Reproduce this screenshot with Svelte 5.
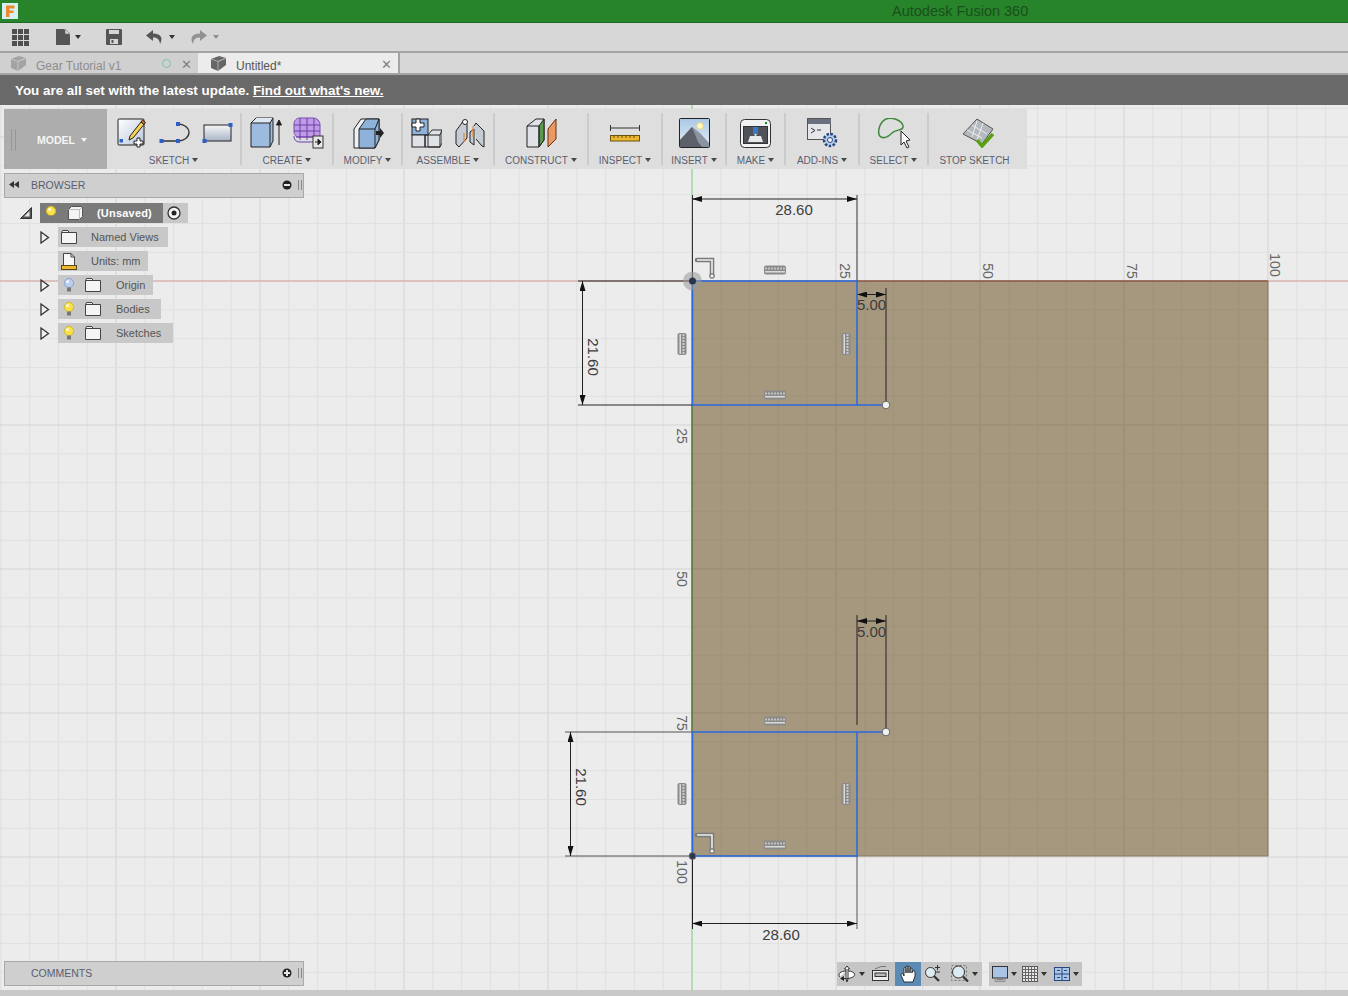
<script>
  const originX = 692;
  const originY = 281;
  const step = 28.8;

  const gridX = [];
  for (let i = -24; i <= 23; i++) gridX.push({ pos: originX + i * step, major: i % 5 === 0 });
  const gridY = [];
  for (let i = -6; i <= 25; i++) gridY.push({ pos: originY + i * step, major: i % 5 === 0 });

  const treeRows = [
    { name: "Named Views", icon: "folder", arrow: true, bulb: null, cls: "r-views" },
    { name: "Units: mm", icon: "units", arrow: false, bulb: null, cls: "r-units" },
    { name: "Origin", icon: "folder", arrow: true, bulb: "blue", cls: "r-origin" },
    { name: "Bodies", icon: "folder", arrow: true, bulb: "yellow", cls: "r-bodies" },
    { name: "Sketches", icon: "folder", arrow: true, bulb: "yellow", cls: "r-sketches" },
  ];

  const topTicks = [
    { x: 845, y: 271, t: "25" },
    { x: 988, y: 271, t: "50" },
    { x: 1132, y: 271, t: "75" },
    { x: 1275, y: 265, t: "100" },
  ];
  const sideTicks = [
    { y: 436, t: "25" },
    { y: 579, t: "50" },
    { y: 723, t: "75" },
    { y: 872, t: "100" },
  ];
  const hMarks = [[775, 270], [775, 395], [775, 721], [775, 845]];
  const vMarks = [[682, 344], [846, 344], [682, 794], [846, 794]];
</script>

{#snippet bulb(kind)}
  <svg class="bulb" width="14" height="16" viewBox="0 0 14 16">
    <circle cx="7" cy="6" r="4.6" fill={kind === "blue" ? "#b9cdf0" : "#f7e04a"} stroke={kind === "blue" ? "#8fa6cc" : "#d8b92a"} />
    <circle cx="5.6" cy="4.6" r="1.6" fill="#fff" opacity="0.8" />
    <rect x="5" y="10.5" width="4" height="4" fill="#777" />
  </svg>
{/snippet}

{#snippet folder()}
  <svg width="16" height="14" viewBox="0 0 16 14">
    <path d="M.5 2.5V13.5H15.5V2.5H8L7 .5H1.5L.5 2.5ZM.5 2.5H8" fill="#f4f4f4" stroke="#444" />
  </svg>
{/snippet}

{#snippet units()}
  <svg width="16" height="17" viewBox="0 0 16 17">
    <path d="M2.5 .5H10L13.5 4V12.5H2.5Z" fill="#f6f6f6" stroke="#444" />
    <path d="M10 .5V4H13.5" fill="none" stroke="#444" />
    <rect x=".5" y="12.5" width="15" height="4" fill="#eeb62e" stroke="#5a4a18" />
  </svg>
{/snippet}

{#snippet arrow()}
  <svg width="10" height="13" viewBox="0 0 10 13">
    <path d="M1 1L8.5 6.5L1 12Z" fill="#f2f2f2" stroke="#333" stroke-width="1.3" />
  </svg>
{/snippet}

{#snippet hMark(x, y, rot)}
  <g transform="translate({x} {y}) rotate({rot})">
    <rect x="-11" y="-4.500" width="22" height="9" rx="2" fill="#8a8a8a" />
    <path d="M-10 1.800H10" stroke="#e8e8e8" stroke-width="1.300" />
    <path d="M-9-.5V-2.500M-6-.5V-2.500M-3-.5V-2.500M0-.5V-2.500M3-.5V-2.500M6-.5V-2.500M9-.5V-2.500" stroke="#e0e0e0" stroke-width="1.300" />
  </g>
{/snippet}

{#snippet perp(y)}
  <g fill="none">
    <path d="M697 {y}H712V{y + 16}" stroke="#7a7a7a" stroke-width="4.500" stroke-linecap="round" />
    <path d="M697 {y}H712V{y + 16}" stroke="#eee" stroke-width="1.600" />
    <circle cx="712" cy={y + 16} r="2.200" fill="#eee" stroke="#7a7a7a" stroke-width="1.200" />
  </g>
{/snippet}

<div class="app">
  <header class="titlebar">
    <svg class="logo" width="16" height="16" viewBox="0 0 16 16">
      <rect width="16" height="16" fill="#d9eef0" />
      <path d="M4 2.5H12.5V5.5H7.5V7.5H11.5V10H7.5V14H4Z" fill="#e98a2c" />
    </svg>
    <span class="app-title">Autodesk Fusion 360</span>
  </header>

  <div class="quickbar">
    <svg class="q-grid" width="17" height="17" viewBox="0 0 17 17" fill="#4f4f4f">
      <rect width="5" height="5" /><rect x="6" width="5" height="5" /><rect x="12" width="5" height="5" />
      <rect y="6" width="5" height="5" /><rect x="6" y="6" width="5" height="5" /><rect x="12" y="6" width="5" height="5" />
      <rect y="12" width="5" height="5" /><rect x="6" y="12" width="5" height="5" /><rect x="12" y="12" width="5" height="5" />
    </svg>
    <svg class="q-doc" width="14" height="16" viewBox="0 0 14 16"><path d="M0 0H8L14 6V16H0Z" fill="#555" /><path d="M9 0L14 5H9Z" fill="#d7d7d7" stroke="#555" stroke-width=".5" /></svg>
    <i class="caret dark q-c1"></i>
    <svg class="q-save" width="16" height="16" viewBox="0 0 16 16"><path d="M1 0H15A1 1 0 0 1 16 1V15A1 1 0 0 1 15 16H1A1 1 0 0 1 0 15V1A1 1 0 0 1 1 0Z" fill="#555" /><rect x="3" y="1" width="10" height="4" fill="#d7d7d7" /><rect x="4" y="10" width="8" height="5" fill="#d7d7d7" /><rect x="5.500" y="11" width="2" height="3" fill="#555" /></svg>
    <svg class="q-undo" width="17" height="14" viewBox="0 0 17 14"><path d="M7 0L0 5.5L7 11V7.5C11 7.500 13.500 9 14 14C17 9 16 3.500 7 3.500Z" fill="#555" /></svg>
    <i class="caret dark q-c2"></i>
    <svg class="q-redo" width="17" height="14" viewBox="0 0 17 14"><path d="M10 0L17 5.500L10 11V7.500C6 7.500 3.500 9 3 14C0 9 1 3.500 10 3.500Z" fill="#929292" /></svg>
    <i class="caret light q-c3"></i>
  </div>

  <nav class="tabs">
    <div class="tab inactive">
      <svg width="16" height="15" viewBox="0 0 16 15"><path d="M1 3L9 0L16 2V9L8 15L1 12Z" fill="#a3a3a3" /><path d="M1 3L8 5.500L16 2L8 5.500V15" fill="none" stroke="#c4c4c4" /></svg>
      <span class="tab-name">Gear Tutorial v1</span>
      <i class="ring"></i>
      <span class="close">✕</span>
    </div>
    <div class="tab active">
      <svg width="16" height="15" viewBox="0 0 16 15"><path d="M1 3L9 0L16 2V9L8 15L1 12Z" fill="#666" /><path d="M1 3L8 5.500L16 2L8 5.500V15" fill="none" stroke="#aaa" /></svg>
      <span class="tab-name">Untitled*</span>
      <span class="close">✕</span>
    </div>
  </nav>

  <div class="banner">You are all set with the latest update. <a href="#new" class="banner-link">Find out what's new.</a></div>

  <main class="viewport">
    <svg class="canvas" viewBox="0 105 1348 891" width="1348" height="891">
      <defs>
        <marker id="arr" markerWidth="10" markerHeight="6" refX="10" refY="3" orient="auto-start-reverse" markerUnits="userSpaceOnUse">
          <path d="M0 0L10 3L0 6Z" fill="#111" />
        </marker>
        <clipPath id="plane"><rect x="692" y="281" width="576" height="575" /></clipPath>
      </defs>

      {#each gridX as g}
        <line x1={g.pos} x2={g.pos} y1="105" y2="996" stroke={g.major ? "#d4d4d4" : "#e0e0e0"} />
      {/each}
      {#each gridY as g}
        <line x1="0" x2="1348" y1={g.pos} y2={g.pos} stroke={g.major ? "#d4d4d4" : "#e0e0e0"} />
      {/each}

      <line x1="0" x2="1348" y1="281" y2="281" stroke="#d9a29c" />
      <line x1="692" x2="692" y1="105" y2="990" stroke="#84d884" />

      <rect x="692" y="281" width="576" height="575" fill="#a5987e" />
      <g clip-path="url(#plane)" stroke-width="1.500">
        {#each gridX as g}
          <line x1={g.pos} x2={g.pos} y1="281" y2="856" stroke={g.major ? "#9c8f76" : "#a1947a"} />
        {/each}
        {#each gridY as g}
          <line x1="692" x2="1268" y1={g.pos} y2={g.pos} stroke={g.major ? "#9c8f76" : "#a1947a"} />
        {/each}
      </g>
      <rect x="692" y="281" width="576" height="575" fill="none" stroke="#85795f" />
      <line x1="692" x2="692" y1="405" y2="732" stroke="#3f7c32" />
      <line x1="857" x2="1268" y1="281" y2="281" stroke="#8a4a3c" />

      {#each topTicks as t}
        <text class="tick" text-anchor="middle" transform="translate({t.x} {t.y}) rotate(90)" dy="5">{t.t}</text>
      {/each}
      {#each sideTicks as t}
        <text class="tick" text-anchor="middle" transform="translate(682 {t.y}) rotate(90)" dy="5">{t.t}</text>
      {/each}

      {#each hMarks as m}
        {@render hMark(m[0], m[1], 0)}
      {/each}
      {#each vMarks as m}
        {@render hMark(m[0], m[1], 90)}
      {/each}
      {@render perp(260)}
      {@render perp(835)}

      <!-- dimensions -->
      <g stroke="#222" fill="none">
        <path d="M692.500 195V281M857 195V281" stroke="#333" />
        <line x1="692" x2="857" y1="199" y2="199" marker-start="url(#arr)" marker-end="url(#arr)" />

        <path d="M578 281H692M578 405H692" />
        <line x1="582.500" x2="582.500" y1="281" y2="405" marker-start="url(#arr)" marker-end="url(#arr)" />

        <path d="M886 288V405" />
        <line x1="857" x2="886" y1="294.500" y2="294.500" marker-start="url(#arr)" marker-end="url(#arr)" />

        <path d="M857 615V725M886 615V732" />
        <line x1="857" x2="886" y1="621" y2="621" marker-start="url(#arr)" marker-end="url(#arr)" />

        <path d="M565 732H692M565 856H692" stroke="#555" />
        <line x1="570.500" x2="570.500" y1="732" y2="856" marker-start="url(#arr)" marker-end="url(#arr)" />

        <path d="M692.500 856V929" />
        <path d="M857 856V929" stroke="#555" />
        <line x1="692" x2="857" y1="923.500" y2="923.500" marker-start="url(#arr)" marker-end="url(#arr)" />
      </g>

      <text class="dim" x="794" y="215" text-anchor="middle">28.60</text>
      <text class="dim" x="781" y="940" text-anchor="middle">28.60</text>
      <text class="dim" x="871.500" y="310" text-anchor="middle">5.00</text>
      <text class="dim" x="871.500" y="637" text-anchor="middle">5.00</text>
      <text class="dim" text-anchor="middle" transform="translate(587.500 357) rotate(90)">21.60</text>
      <text class="dim" text-anchor="middle" transform="translate(575.500 787) rotate(90)">21.60</text>

      <!-- sketch lines -->
      <g stroke="#2a68e0" stroke-width="1.500" fill="none">
        <path d="M692.500 281H857V405H692.500Z" />
        <path d="M857 405H886" />
        <path d="M692.500 732H886M857 732V856H692.500V732" />
      </g>
      <circle cx="886" cy="405" r="3.800" fill="#f2f2f2" stroke="#666" />
      <circle cx="886" cy="732" r="3.800" fill="#f2f2f2" stroke="#666" />
      <circle cx="692.500" cy="281" r="9.500" fill="#999" fill-opacity="0.55" />
      <circle cx="692.500" cy="281" r="3.500" fill="#2a3550" />
      <circle cx="692.500" cy="856" r="3.500" fill="#2a3550" stroke="#777" />
    </svg>

    <div class="overlay">
      <div class="toolbar">
        <div class="model">
          <i class="grip"></i>
          <span class="model-label">MODEL</span>
          <i class="caret white"></i>
        </div>

        <div class="tool t-sketch">
          <div class="icons">
            <svg width="30" height="30" viewBox="0 0 30 30">
              <defs><linearGradient id="paper" x1="0" y1="0" x2="1" y2="1"><stop offset="0" stop-color="#fff" /><stop offset="1" stop-color="#b8c6dc" /></linearGradient></defs>
              <rect x="1" y="1" width="26" height="26" rx="1" fill="url(#paper)" stroke="#222" />
              <rect x="2.500" y="21" width="3.500" height="3.500" fill="#2d66c8" />
              <path d="M13 18L24 4L27 6.500L16 20L12 22Z" fill="#f6d34e" stroke="#222" />
              <path d="M24 4L25.500 2L28.500 4.500L27 6.500Z" fill="#d9702a" stroke="#222" />
              <path d="M20 20H23V23H26V26H23V29H20V26H17V23H20Z" fill="#fff" stroke="#222" />
            </svg>
            <svg class="sk-curve" width="33" height="25" viewBox="0 0 33 25">
              <path d="M3 20H19A11 8.500 0 0 0 19 3" fill="none" stroke="#333" stroke-width="1.300" />
              <rect x=".500" y="18" width="4" height="4" fill="#2d5fc4" />
              <rect x="17" y="18" width="4" height="4" fill="#2d5fc4" />
              <rect x="17" y="1" width="4" height="4" fill="#2d5fc4" />
            </svg>
            <svg width="31" height="22" viewBox="0 0 31 22">
              <defs><linearGradient id="plate" x1="0" y1="0" x2="0" y2="1"><stop offset="0" stop-color="#f6f6f6" /><stop offset="1" stop-color="#a9b4c8" /></linearGradient></defs>
              <rect x="2" y="3" width="27" height="16" fill="url(#plate)" stroke="#222" />
              <rect x="26.500" y="1" width="4" height="4" fill="#2d5fc4" />
              <rect x=".500" y="17" width="4" height="4" fill="#2d5fc4" />
            </svg>
          </div>
          <span class="label">SKETCH<i class="caret"></i></span>
        </div>
        <i class="sep"></i>

        <div class="tool t-create">
          <div class="icons">
            <svg width="32" height="32" viewBox="0 0 32 32">
              <path d="M1 6L6 1H23V24L20 30H1Z" fill="#9cbbde" stroke="#222" />
              <path d="M6 1V1L1 6H20L23 1" fill="#dfe8f2" stroke="#222" />
              <path d="M20 6V30" stroke="#222" />
              <path d="M29 28V5M26.500 8L29 3L31.500 8Z" stroke="#222" fill="#222" />
            </svg>
            <svg width="31" height="32" viewBox="0 0 31 32">
              <path d="M7 1H20C24 1 27 4 27 8V20H6C3 20 1 18 1 14V7C1 4 3 1 7 1Z" fill="#bf9ae6" stroke="#7a4fb0" />
              <path d="M1 8H27M1 14H27M7 1V23M14 1V23M21 1V23M3 20H27V25H7Q1 25 1 19" fill="none" stroke="#6a3fa5" />
              <rect x="20" y="19" width="10" height="12" fill="#e6e6e6" stroke="#333" />
              <path d="M22 25H25M25 22L28 25L25 28Z" fill="#222" stroke="#222" />
            </svg>
          </div>
          <span class="label">CREATE<i class="caret"></i></span>
        </div>
        <i class="sep"></i>

        <div class="tool t-modify">
          <div class="icons">
            <svg width="31" height="31" viewBox="0 0 31 31">
              <path d="M1 11L8 1H26V22L22 30H1Z" fill="#eef1f5" stroke="#222" />
              <path d="M6 11L13 1H26V22L22 30H6Z" fill="#8fb2db" stroke="#222" />
              <path d="M6 11H22V30M22 11L26 1" fill="none" stroke="#222" />
              <path d="M23 13H27V10L31 15L27 20V17H23Z" fill="#222" />
            </svg>
          </div>
          <span class="label">MODIFY<i class="caret"></i></span>
        </div>
        <i class="sep"></i>

        <div class="tool t-assemble">
          <div class="icons">
            <svg width="31" height="30" viewBox="0 0 31 30">
              <rect x="1" y="1" width="16" height="16" fill="#8fb2db" stroke="#222" />
              <path d="M5 1H9V5H13V9H9V13H5V9H1V5H5Z" fill="#fff" stroke="#222" />
              <path d="M17 17L21 12H31V25L29 29H17Z" fill="#dfe3e8" stroke="#333" />
              <rect x="1" y="17" width="13" height="12" fill="#dfe3e8" stroke="#222" />
              <path d="M14 17H29V29H14ZM29 17L31 12" fill="none" stroke="#222" />
            </svg>
            <svg width="30" height="30" viewBox="0 0 30 30">
              <path d="M1 13L9 2L12 6V20L4 29L1 26Z" fill="#c6ccd4" stroke="#222" />
              <circle cx="10" cy="4" r="2.500" fill="#fff" stroke="#222" />
              <path d="M15 14L19 11V27L15 24ZM19 8L21 5L29 13V29L27 28L21 21" fill="#c6ccd4" stroke="#222" />
              <path d="M18 8V19M9 15V24" stroke="#e98a2c" stroke-width="1.200" />
            </svg>
          </div>
          <span class="label">ASSEMBLE<i class="caret"></i></span>
        </div>
        <i class="sep"></i>

        <div class="tool t-construct">
          <div class="icons">
            <svg width="31" height="30" viewBox="0 0 31 30">
              <path d="M1 8L10 1H18V22L13 29H1Z" fill="#dfe3e8" stroke="#222" />
              <path d="M13 8L18 1V22L13 29Z" fill="#5a9a4a" stroke="#222" />
              <path d="M1 8H13V29" fill="none" stroke="#222" />
              <path d="M22 11L30 1V21L22 29Z" fill="#e89a62" stroke="#6a2f14" />
            </svg>
          </div>
          <span class="label">CONSTRUCT<i class="caret"></i></span>
        </div>
        <i class="sep"></i>

        <div class="tool t-inspect">
          <div class="icons">
            <svg width="30" height="18" viewBox="0 0 30 18">
              <path d="M1 4H29M.500 1V7M29.500 1V7" stroke="#333" fill="none" />
              <rect x=".500" y="11.500" width="29" height="5.500" fill="#eab72f" stroke="#6a5212" />
              <path d="M4 12V14M8 12V14M12 12V14M16 12V14M20 12V14M24 12V14" stroke="#6a5212" />
            </svg>
          </div>
          <span class="label">INSPECT<i class="caret"></i></span>
        </div>
        <i class="sep"></i>

        <div class="tool t-insert">
          <div class="icons">
            <svg width="31" height="31" viewBox="0 0 31 31">
              <defs><linearGradient id="sky" x1="0" y1="0" x2="0" y2="1"><stop offset="0" stop-color="#a9c8e6" /><stop offset="1" stop-color="#e8eef4" /></linearGradient></defs>
              <rect x=".500" y=".500" width="30" height="29" rx="1" fill="url(#sky)" stroke="#222" />
              <circle cx="21" cy="8" r="3.200" fill="#fff6c4" stroke="#f0d878" />
              <path d="M1 22L13 9L21 15L30 25V29H1Z" fill="#8a94a2" />
              <path d="M1 22L13 9L19 24L23 29H1Z" fill="#5c6068" />
            </svg>
          </div>
          <span class="label">INSERT<i class="caret"></i></span>
        </div>
        <i class="sep"></i>

        <div class="tool t-make">
          <div class="icons">
            <svg width="31" height="29" viewBox="0 0 31 29">
              <rect x=".500" y=".500" width="30" height="28" rx="4" fill="#f2f2f2" stroke="#333" />
              <rect x="3.500" y="7.500" width="24" height="17" fill="#50525a" stroke="#333" />
              <rect x="13" y="8" width="5" height="7" fill="#3a78c8" />
              <path d="M14 15H17L15.500 18Z" fill="#ddd" />
              <path d="M8 23L10 17H21L23 23Z" fill="#e8e8e8" />
              <rect x="25" y="3" width="2" height="2" fill="#0a8a2a" />
            </svg>
          </div>
          <span class="label">MAKE<i class="caret"></i></span>
        </div>
        <i class="sep"></i>

        <div class="tool t-addins">
          <div class="icons">
            <svg width="31" height="30" viewBox="0 0 31 30">
              <rect x=".500" y=".500" width="23" height="21" fill="#e4e6ea" stroke="#555" />
              <rect x="1" y="1" width="23" height="5" fill="#6a7080" />
              <path d="M4 10L8 12.500L4 15M10 12H14" fill="none" stroke="#333" />
              <circle cx="23" cy="22" r="6" fill="#b8cdea" stroke="#27477e" stroke-width="2.500" stroke-dasharray="2.500 1.500" />
              <circle cx="23" cy="22" r="2.500" fill="#f2f2f2" stroke="#27477e" />
            </svg>
          </div>
          <span class="label">ADD-INS<i class="caret"></i></span>
        </div>
        <i class="sep"></i>

        <div class="tool t-select">
          <div class="icons">
            <svg width="34" height="31" viewBox="0 0 34 31">
              <path d="M9 1C15 -1 25 2 26 8C27 13 19 11 15 15C12 18 8 21 4 19C0 17 1 5 9 1Z" fill="none" stroke="#3f8a3a" stroke-width="1.500" />
              <path d="M24 13V27L27 24L30 30L32 29L29 23L33 22Z" fill="#fff" stroke="#222" />
            </svg>
          </div>
          <span class="label">SELECT<i class="caret"></i></span>
        </div>
        <i class="sep"></i>

        <div class="tool t-stop">
          <div class="icons">
            <svg width="32" height="30" viewBox="0 0 32 30">
              <path d="M1 16L15 1L31 11L20 26Z" fill="#b4b8bf" stroke="#555" />
              <path d="M5 12L20 20M10 7L25 16M15 3L10 19M21 5L15 22" stroke="#eee" fill="none" />
              <path d="M15 22L20 28L31 16" fill="none" stroke="#5aa012" stroke-width="3.500" />
            </svg>
          </div>
          <span class="label">STOP SKETCH</span>
        </div>
      </div>

      <div class="panel browser">
        <svg class="rewind" width="10" height="7" viewBox="0 0 10 7" fill="#333"><path d="M5 0V7L0 3.500ZM10 0V7L5 3.500Z" /></svg>
        <span class="panel-title">BROWSER</span>
        <svg class="pin" width="10" height="10" viewBox="0 0 10 10"><circle cx="5" cy="5" r="4.500" fill="#222" /><rect x="2" y="4" width="6" height="2" fill="#e6e6e6" /></svg>
        <i class="panel-grip"></i>
      </div>

      <div class="tree">
        <div class="row root-row">
          <svg class="collapse" width="12" height="12" viewBox="0 0 12 12"><path d="M11.500 .5V11.500H.5Z" fill="#555" stroke="#333" /><path d="M9.500 4V9.500H4Z" fill="#e8e8e8" /></svg>
          <div class="root-main">
            {@render bulb("yellow")}
            <svg class="root-cube" width="15" height="14" viewBox="0 0 15 14"><path d="M.5 3.500L3.500 .5H14.500V10.500L11.500 13.500H.5Z" fill="#f4f4f4" stroke="#555" /><path d="M.5 3.500H11.500V13.500M11.500 3.500L14.500 .5" fill="none" stroke="#bbb" /></svg>
            <span class="root-name">(Unsaved)</span>
          </div>
          <div class="root-end"><svg width="14" height="14" viewBox="0 0 14 14"><circle cx="7" cy="7" r="6" fill="#f4f4f4" stroke="#333" stroke-width="1.300" /><circle cx="7" cy="7" r="2.500" fill="#222" /></svg></div>
        </div>
        {#each treeRows as r}
          <div class="row">
            <span class="expander">{#if r.arrow}{@render arrow()}{/if}</span>
            <div class="node {r.cls}" class:has-bulb={r.bulb}>
              {#if r.bulb}{@render bulb(r.bulb)}{/if}
              <span class="node-icon">{#if r.icon === "folder"}{@render folder()}{:else}{@render units()}{/if}</span>
              <span class="node-name">{r.name}</span>
            </div>
          </div>
        {/each}
      </div>

      <div class="footer">
        <div class="panel comments">
          <span class="panel-title">COMMENTS</span>
          <svg class="pin" width="10" height="10" viewBox="0 0 10 10"><circle cx="5" cy="5" r="4.500" fill="#222" /><path d="M2 4H4V2H6V4H8V6H6V8H4V6H2Z" fill="#e6e6e6" /></svg>
          <i class="panel-grip"></i>
        </div>

        <div class="nav-group first">
          <div class="nav-btn w32 nudge">
            <svg width="18" height="18" viewBox="0 0 18 18"><path d="M9 1L11.500 4H10V14L9 17L8 14V4H6.500ZM2 12C-1 9 3 6 8 6M10 6C15 6 19 9 15 12C13 13 10 14 6 13.500" fill="#fff" stroke="#333" /><path d="M6 11V16L2 13.500Z" fill="#222" /></svg>
            <i class="caret dark"></i>
          </div>
          <div class="nav-btn w26 nudge">
            <svg width="17" height="15" viewBox="0 0 17 15"><rect x=".5" y="4.500" width="16" height="10" fill="#eee" stroke="#333" /><rect x="3" y="7" width="11" height="3.500" fill="#bbb" stroke="#333" /><path d="M3 3L9 .5H14" fill="none" stroke="#777" /></svg>
          </div>
          <div class="nav-btn w26 on">
            <svg width="17" height="18" viewBox="0 0 17 18"><path d="M4 17L1 10C.5 8.500 2 8 3 9L4 11V3.500C4 2 6 2 6 3.500V8V2C6 .5 8 .5 8 2V8V2.500C8 1 10 1 10 2.500V8V4C10 2.500 12 2.500 12 4V8V7C12 5.500 15 5.500 15 7V11L13 17Z" fill="#fff" stroke="#222" stroke-width=".9" /></svg>
          </div>
          <div class="nav-btn w26 nudge">
            <svg width="17" height="17" viewBox="0 0 17 17"><circle cx="6.500" cy="7.500" r="5" fill="#dcecf4" stroke="#333" /><path d="M10 11L15 16" stroke="#333" stroke-width="2.200" /><path d="M11 2.500H16M13.500 0V5M11 7H16" stroke="#333" fill="none" /></svg>
          </div>
          <div class="nav-btn w35">
            <svg width="18" height="18" viewBox="0 0 18 18"><rect x=".5" y=".5" width="15" height="15" fill="none" stroke="#777" stroke-dasharray="2 2" /><circle cx="7.500" cy="7" r="6" fill="#dcecf4" stroke="#333" /><path d="M12 11.500L17 16.500" stroke="#333" stroke-width="2.200" /></svg>
            <i class="caret dark"></i>
          </div>
        </div>

        <div class="nav-group second">
          <div class="nav-btn w30">
            <svg width="16" height="16" viewBox="0 0 16 16"><rect x=".5" y=".5" width="15" height="11.500" fill="#a9c4e6" stroke="#333" /><rect x="5" y="12" width="6" height="2" fill="#888" /><rect x="3" y="14" width="10" height="1.500" fill="#ddd" stroke="#555" stroke-width=".5" /></svg>
            <i class="caret dark"></i>
          </div>
          <div class="nav-btn w31">
            <svg width="16" height="16" viewBox="0 0 16 16"><rect x=".5" y=".5" width="15" height="15" fill="#e8e8e8" stroke="#555" /><path d="M3.500 0V16M6.500 0V16M9.500 0V16M12.500 0V16M0 3.500H16M0 6.500H16M0 9.500H16M0 12.500H16" stroke="#666" /></svg>
            <i class="caret dark"></i>
          </div>
          <div class="nav-btn w32">
            <svg width="16" height="14" viewBox="0 0 16 14"><rect x=".5" y=".5" width="15" height="13" fill="#a9c4e6" stroke="#27477e" /><path d="M8 0V14M0 7H16M3 3.500H6M10 3.500H13M3 10.500H6M10 10.500H13" stroke="#27477e" /></svg>
            <i class="caret dark"></i>
          </div>
        </div>
      </div>
    </div>

    <div class="bottom-strip"></div>
  </main>
</div>

<style>
  :global(body) {
    margin: 0;
    background: #ececec;
    font-family: "Liberation Sans", Arial, sans-serif;
  }
  .app {
    width: 1348px;
    height: 996px;
    display: flex;
    flex-direction: column;
    overflow: hidden;
  }
  svg {
    display: block;
    flex: none;
  }
  .titlebar {
    height: 23px;
    box-sizing: border-box;
    background: #27842a;
    border-bottom: 1px solid #1f6a22;
    display: flex;
    align-items: center;
    padding-left: 2px;
  }
  .app-title {
    margin-left: 874px;
    font-size: 14.5px;
    color: #1a4f1d;
  }
  .quickbar {
    height: 30px;
    box-sizing: border-box;
    background: #d7d7d7;
    border-bottom: 2px solid #a3a3a3;
    display: flex;
    align-items: center;
    padding-left: 12px;
  }

  .caret {
    display: inline-block;
    width: 0;
    height: 0;
    border-left: 3px solid transparent;
    border-right: 3px solid transparent;
    border-top: 4px solid #4a4a4a;
    margin-left: 3px;
    vertical-align: 2px;
    flex: none;
  }
  .caret.dark { border-left-width: 3.5px; border-right-width: 3.5px; border-top-color: #333; }
  .caret.light { border-left-width: 3.5px; border-right-width: 3.5px; border-top-color: #8e8e8e; }
  .caret.white { border-top-color: #f4f4f4; margin-left: 6px; }

  .q-doc { margin-left: 27px; }
  .caret.q-c1 { margin-left: 5px; }
  .q-save { margin-left: 25px; }
  .q-undo { margin-left: 24px; }
  .caret.q-c2 { margin-left: 6px; }
  .q-redo { margin-left: 15px; }
  .caret.q-c3 { margin-left: 6px; }

  .tabs {
    height: 22px;
    box-sizing: border-box;
    background: #d7d7d7;
    border-bottom: 2px solid #a3a3a3;
    display: flex;
  }
  .tab {
    height: 20px;
    box-sizing: border-box;
    display: flex;
    align-items: center;
    padding-left: 10px;
    font-size: 12px;
  }
  .tab.inactive {
    background: #d0d0d0;
    color: #8d8d8d;
    border-right: 2px solid #ececec;
    width: 200px;
  }
  .tab.active {
    background: #ececec;
    color: #555;
    border-right: 2px solid #a3a3a3;
    width: 200px;
  }
  .tab-name {
    margin-left: 10px;
    padding-top: 5px;
    flex: 1;
  }
  .ring {
    width: 7px;
    height: 7px;
    border: 1.5px solid #73c6b0;
    border-radius: 50%;
    margin-right: 10px;
  }
  .close {
    font-size: 13px;
    font-weight: bold;
    font-family: "DejaVu Sans", sans-serif;
    color: #808080;
    margin-right: 6px;
    padding-top: 2px;
  }
  .banner {
    height: 30px;
    background: #696969;
    color: #fff;
    font-size: 13.4px;
    font-weight: bold;
    line-height: 31px;
    padding-left: 15px;
    flex: none;
  }
  .banner-link {
    color: #fff;
    text-decoration: underline;
  }

  .viewport {
    position: relative;
    flex: 1;
    background: #ececec;
  }
  .canvas {
    position: absolute;
    inset: 0;
  }
  .tick {
    font-size: 14px;
    fill: #666;
  }
  .dim {
    font-size: 15px;
    fill: #3c3c3c;
  }
  .bottom-strip {
    position: absolute;
    left: 0;
    right: 0;
    bottom: 0;
    height: 6px;
    background: #c9c9c9;
  }
  .overlay {
    position: absolute;
    inset: 0;
    display: flex;
    flex-direction: column;
    padding: 4px 0 10px 4px;
    box-sizing: border-box;
  }

  .toolbar {
    width: 1023px;
    height: 60px;
    background: #dedede;
    display: flex;
    align-items: stretch;
    flex: none;
  }
  .model {
    width: 103px;
    background: #adadad;
    display: flex;
    align-items: center;
    padding: 2px 0 0 7px;
    box-sizing: border-box;
  }
  .grip {
    width: 3px;
    height: 22px;
    border-left: 1px solid #969696;
    border-right: 1px solid #969696;
  }
  .model-label {
    margin-left: 21px;
    color: #f6f6f6;
    font-size: 10.5px;
    font-weight: bold;
  }
  .tool {
    display: flex;
    flex-direction: column;
    align-items: center;
    justify-content: flex-end;
    box-sizing: border-box;
    padding-bottom: 2px;
  }
  .icons {
    flex: 1;
    display: flex;
    align-items: center;
    justify-content: center;
    gap: 10px;
    padding-top: 2px;
  }
  .label {
    font-size: 10px;
    line-height: 12px;
    color: #5a5e70;
    white-space: nowrap;
  }
  .sep {
    width: 2px;
    margin: 4px 0;
    background: #cbcbcb;
    flex: none;
  }
  .t-sketch { width: 133px; }
  .t-create { width: 90px; }
  .t-modify { width: 67px; }
  .t-assemble { width: 90px; }
  .t-construct { width: 92px; }
  .t-inspect { width: 72px; }
  .t-insert { width: 62px; }
  .t-make { width: 57px; }
  .t-addins { width: 72px; }
  .t-select { width: 67px; }
  .t-stop { width: 97px; }
  .t-sketch .icons { padding-left: 2px; }
  .sk-curve { margin-left: 2px; }
  .t-assemble .icons { gap: 13px; }
  .t-create .icons { gap: 11px; }
  .t-modify .icons { padding-left: 2px; }
  .t-stop .label { margin-right: 6px; }

  .panel {
    width: 300px;
    height: 25px;
    box-sizing: border-box;
    background: #cfcfcf;
    border: 1px solid #a8a8a8;
    display: flex;
    align-items: center;
    padding: 0 1px 2px 4px;
    flex: none;
  }
  .browser { margin-top: 4px; }
  .panel-title {
    font-size: 10.5px;
    color: #5a5e70;
    margin-left: 12px;
    flex: 1;
  }
  .comments .panel-title { margin-left: 22px; }
  .pin { margin-right: 6px; }
  .panel-grip {
    width: 2px;
    height: 10px;
    border-left: 1px solid #888;
    border-right: 1px solid #888;
  }

  .tree {
    margin-top: 5px;
    display: flex;
    flex-direction: column;
    gap: 4px;
    font-size: 11px;
    color: #555;
  }
  .row {
    height: 20px;
    display: flex;
    align-items: center;
  }
  .root-row { margin-left: 16px; }
  .collapse { margin-right: 8px; }
  .root-main {
    width: 123px;
    height: 20px;
    background: #7a7a7a;
    color: #fff;
    display: flex;
    align-items: center;
    padding-left: 4px;
    box-sizing: border-box;
    font-weight: bold;
  }
  .root-cube { margin-left: 10px; }
  .root-name { margin-left: 14px; letter-spacing: 0.2px; }
  .root-end {
    width: 25px;
    height: 20px;
    background: #c8c8c8;
    display: flex;
    align-items: center;
    justify-content: center;
    padding-right: 4px;
    box-sizing: border-box;
  }
  .expander {
    width: 10px;
    margin-left: 36px;
    margin-right: 8px;
    display: flex;
  }
  .node {
    height: 20px;
    background: #c8c8c8;
    display: flex;
    align-items: center;
    padding-left: 3px;
    box-sizing: border-box;
  }
  .node-icon {
    width: 30px;
    display: flex;
  }
  .has-bulb .node-icon { margin-left: 9px; width: 31px; }
  .has-bulb { padding-left: 4px; }
  .r-views { width: 110px; }
  .r-units { width: 90px; }
  .r-origin { width: 95px; }
  .r-bodies { width: 103px; }
  .r-sketches { width: 115px; }

  .footer {
    margin-top: auto;
    display: flex;
    align-items: center;
  }
  .nav-group {
    height: 24px;
    background: #c5c5c5;
    display: flex;
    align-items: center;
  }
  .nav-group.first { margin-left: 533px; }
  .nav-group.second { margin-left: 7px; }
  .nav-btn {
    height: 24px;
    display: flex;
    align-items: center;
    justify-content: center;
    box-sizing: border-box;
  }
  .nav-btn.nudge { padding-right: 3px; }
  .nav-btn.on { background: #5b8ab5; }
  .w26 { width: 26px; }
  .w30 { width: 30px; }
  .w31 { width: 31px; }
  .w32 { width: 32px; }
  .w35 { width: 35px; }
</style>
